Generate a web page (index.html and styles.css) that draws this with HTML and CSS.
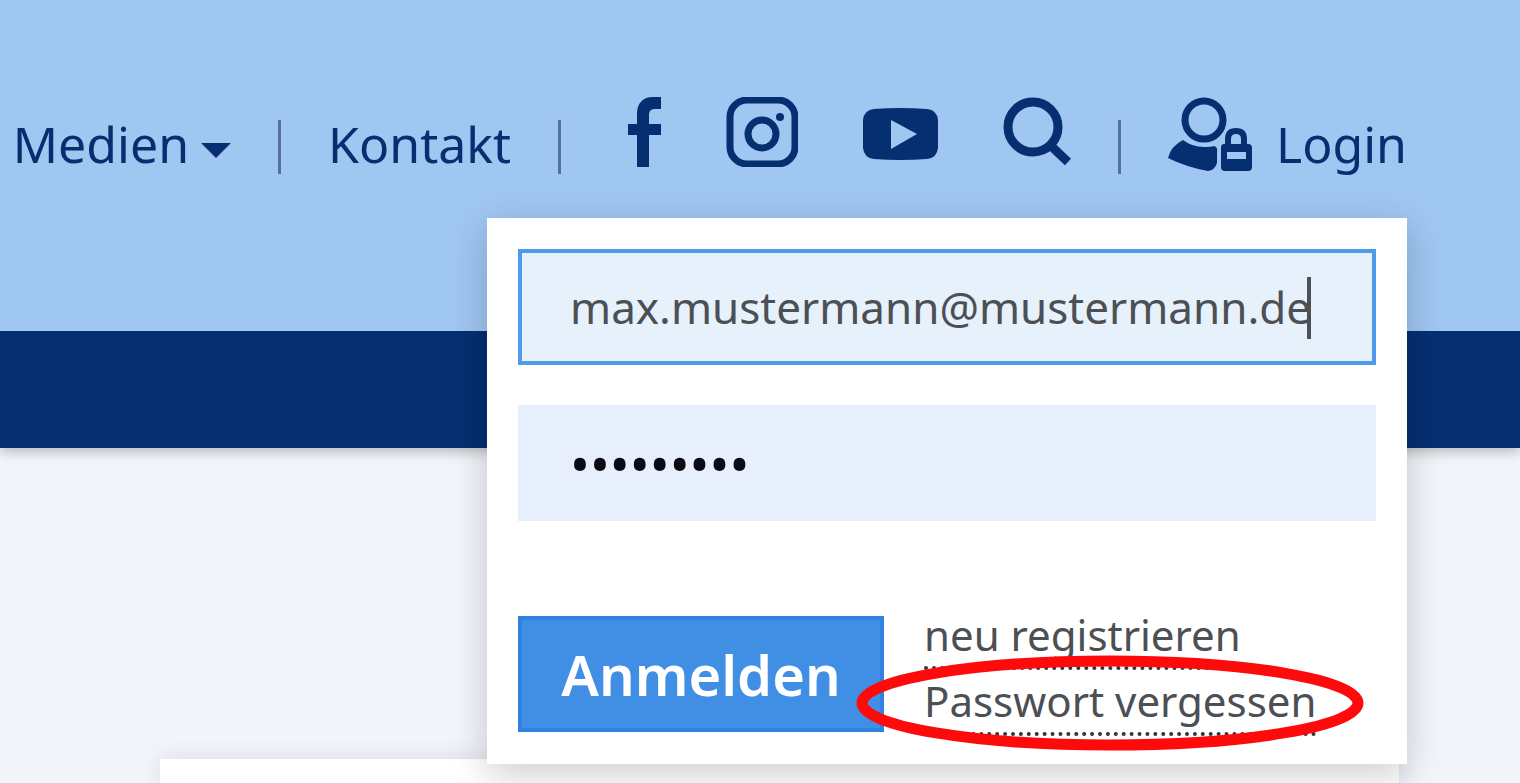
FILE: index.html
```html
<!DOCTYPE html>
<html lang="de">
<head>
    <meta charset="UTF-8">
    <meta name="viewport" content="width=device-width, initial-scale=1.0">
    <title>Login</title>
    <link rel="stylesheet" href="styles.css">
</head>
<body>
    <header class="header">
        <nav class="meta-nav">
            <a href="#" class="nav-link">Medien<span class="caret"></span></a>
            <span class="separator"></span>
            <a href="#" class="nav-link">Kontakt</a>
            <span class="separator"></span>

            <div class="social">
                <a href="#" class="icon-link" aria-label="Facebook">
                    <svg width="33" height="70" viewBox="0 0 33 70"><path fill="currentColor" d="M33 0v12h-6c-4 0-6 2-6 6v9h12v11H21v32H9V38H0V27h9V17C9 6 15 0 25 0z"/></svg>
                </a>
                <a href="#" class="icon-link" aria-label="Instagram">
                    <svg width="72" height="70" viewBox="0 0 72 70" fill="none" stroke="currentColor">
                        <rect x="4" y="3" width="65" height="64" rx="17" stroke-width="7"/>
                        <circle cx="36" cy="37" r="14" stroke-width="7"/>
                        <circle cx="54" cy="20" r="4" fill="currentColor" stroke="none"/>
                    </svg>
                </a>
                <a href="#" class="icon-link" aria-label="YouTube">
                    <svg width="75" height="56" viewBox="0 -4 75 56">
                        <path fill="currentColor" fill-rule="evenodd" d="M11 1Q37 -1 64 1Q74 2 75 12V40Q74 50 64 51Q37 53 11 51Q1 50 0 40V12Q1 2 11 1zM28 12v29l26-15z"/>
                    </svg>
                </a>
                <a href="#" class="icon-link" aria-label="Suche">
                    <svg width="68" height="70" viewBox="0 0 68 70" fill="none" stroke="currentColor">
                        <circle cx="30" cy="30" r="25" stroke-width="9"/>
                        <path d="M46 47L65 65" stroke-width="9"/>
                    </svg>
                </a>
            </div>

            <span class="separator"></span>
            <a href="#" class="nav-link login-link">
                <svg width="84" height="77" viewBox="0 0 84 77">
                    <circle cx="36" cy="23" r="19" fill="none" stroke="currentColor" stroke-width="7"/>
                    <path fill="currentColor" d="M15 43Q24 50 36 50Q43 50 46 49Q50 50 49 55V66Q47 73 40 74Q18 70 0 61Q3 49 15 43z"/>
                    <path fill="none" stroke="currentColor" stroke-width="6" d="M60 51V42Q60 34 68 34Q76 34 76 42V51"/>
                    <path fill="currentColor" fill-rule="evenodd" d="M56 47H80Q84 47 84 51V70Q84 74 80 74H57Q53 74 53 70V51Q53 47 56 47zM59 55V62H78V55z"/>
                </svg>
                Login
            </a>
        </nav>

        <form class="login-panel">
            <div class="field">
                <input type="email" class="text-input active" aria-label="E-Mail" value="max.mustermann@mustermann.de">
                <span class="text-cursor"></span>
            </div>
            <div class="field">
                <input type="password" class="text-input password" aria-label="Passwort" value="muster123">
            </div>
            <div class="actions">
                <button type="submit" class="submit">Anmelden</button>
                <div class="links">
                    <a href="#">neu registrieren</a>
                    <a href="#">Passwort vergessen</a>
                    <svg class="marker" width="508" height="98" viewBox="0 0 508 98">
                        <ellipse cx="254" cy="49" rx="248" ry="42" fill="none" stroke="#ff0a0a" stroke-width="11"/>
                    </svg>
                </div>
            </div>
        </form>
    </header>

    <div class="main-bar"></div>

    <main class="content">
        <section class="content-card"></section>
    </main>
</body>
</html>
```
FILE: styles.css
```css
* {
    margin: 0;
    padding: 0;
    box-sizing: border-box;
}

body {
    font-family: "Noto Sans", "Open Sans", sans-serif;
    background: #f2f6fb;
    color: #4c4f54;
    height: 100vh;
    display: flex;
    flex-direction: column;
    overflow: hidden;
}

a {
    color: inherit;
    text-decoration: none;
}

svg {
    display: block;
}

.header {
    position: relative;
    flex: none;
    height: 331px;
    padding: 97px 113px 0 0;
    background: #a0c6f2;
    color: #052f70;
}

.meta-nav {
    display: flex;
    justify-content: flex-end;
    align-items: flex-end;
    gap: 47px;
    height: 77px;
}

.nav-link {
    display: flex;
    align-items: center;
    font-size: 50px;
    line-height: 60px;
}

.caret {
    margin: 12px 0 0 12px;
    border: 15px solid transparent;
    border-top-color: currentColor;
    border-bottom: 0;
}

.separator {
    width: 3px;
    height: 54px;
    background: #5670a5;
}

.social {
    display: flex;
    align-items: center;
    align-self: flex-start;
    gap: 65px;
    padding-left: 20px;
}

.login-link {
    align-items: flex-end;
    gap: 24px;
}

/* Login-Dropdown */
.login-panel {
    position: absolute;
    z-index: 10;
    top: 218px;
    right: 113px;
    width: 920px;
    padding: 31px 31px 28px;
    background: #fff;
    color: #4c4f54;
    box-shadow: 0 10px 36px rgba(0, 0, 0, 0.2);
}

.field {
    position: relative;
    margin-bottom: 40px;
}

.text-input {
    display: block;
    width: 100%;
    height: 116px;
    padding: 0 48px;
    border: 4px solid #e7eefc;
    border-radius: 0;
    outline: 0;
    background: #e7eefc;
    color: inherit;
    font-family: inherit;
    font-size: 44px;
}

.text-input.active {
    border-color: #509ae9;
    background: #e6f1fc;
}

.text-input.password {
    color: #0b0b14;
    font-size: 53px;
}

.text-cursor {
    position: absolute;
    top: 28px;
    right: 65px;
    width: 4px;
    height: 62px;
    background: #4c4f54;
}

.actions {
    display: flex;
    align-items: flex-start;
    gap: 40px;
    margin-top: 95px;
}

.submit {
    width: 366px;
    height: 116px;
    border: 4px solid #2f82e2;
    background: #418fe5;
    color: #fff;
    font-family: inherit;
    font-size: 56px;
    font-weight: 600;
}

.links {
    position: relative;
    display: flex;
    flex-direction: column;
    align-items: flex-start;
    gap: 12px;
    font-size: 42px;
    line-height: 38px;
}

.links a {
    padding-bottom: 12px;
    border-bottom: 4px dotted #33353a;
}

.marker {
    position: absolute;
    top: 38px;
    left: -68px;
    pointer-events: none;
}

.main-bar {
    flex: none;
    height: 117px;
    background: #052f70;
    box-shadow: 0 4px 12px rgba(0, 0, 0, 0.25);
}

.content {
    flex: 1;
    display: flex;
    padding: 311px 121px 0 160px;
}

.content-card {
    flex: 1;
    background: #fff;
    box-shadow: 0 0 24px rgba(0, 0, 0, 0.12);
}
```
